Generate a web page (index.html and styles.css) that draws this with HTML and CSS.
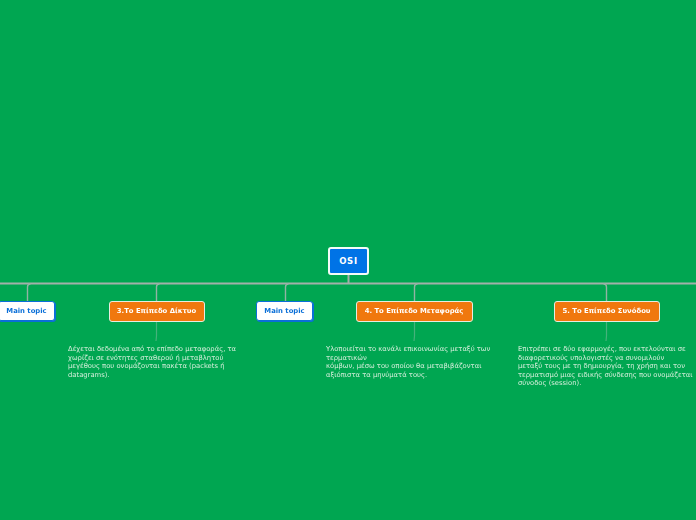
FILE: index.html
```html
<!DOCTYPE html>
<html lang="el">
<head>
<meta charset="utf-8">
<title>OSI</title>
<link rel="stylesheet" href="styles.css">
</head>
<body>
<main class="canvas">
  <svg class="links" width="696" height="520" viewBox="0 0 696 520" fill="none">
    <path class="trunk" d="M0 283.5H696M348.5 275V283"/>
    <path class="branch" d="M27.5 301V287Q27.5 284 30.5 284M156.5 301V287Q156.5 284 159.5 284M285.5 301V287Q285.5 284 288.5 284M414.5 301V287Q414.5 284 417.5 284M606.5 301V287Q606.5 284 603.5 284"/>
    <path class="note-link" d="M156.5 321V336L156 341M414.5 321V336L414 341M606.5 321V336L606 341"/>
  </svg>
  <div class="node root n-root">OSI</div>
  <div class="node plain n-m1">Main topic</div>
  <div class="node topic n-3">3.Το Επίπεδο Δίκτυο</div>
  <div class="node plain n-m2">Main topic</div>
  <div class="node topic n-4">4. Το Επίπεδο Μεταφοράς</div>
  <div class="node topic n-5">5. Το Επίπεδο Συνόδου</div>
  <p class="note t-3">Δέχεται δεδομένα από το επίπεδο μεταφοράς, τα<br>χωρίζει σε ενότητες σταθερού ή μεταβλητού<br>μεγέθους που ονομάζονται πακέτα (packets ή<br>datagrams).</p>
  <p class="note t-4">Υλοποιείται το κανάλι επικοινωνίας μεταξύ των<br>τερματικών<br>κόμβων, μέσω του οποίου θα μεταβιβάζονται<br>αξιόπιστα τα μηνύματά τους.</p>
  <p class="note t-5">Επιτρέπει σε δύο εφαρμογές, που εκτελούνται σε<br>διαφορετικούς υπολογιστές να συνομιλούν<br>μεταξύ τους με τη δημιουργία, τη χρήση και τον<br>τερματισμό μιας ειδικής σύνδεσης που ονομάζεται<br>σύνοδος (session).</p>
</main>
</body>
</html>
```
FILE: styles.css
```css
html, body {
  margin: 0;
  padding: 0;
  width: 696px;
  height: 520px;
  overflow: hidden;
  background: #00a651;
}
.canvas {
  position: relative;
  width: 696px;
  height: 520px;
  overflow: hidden;
  filter: blur(.3px);
  font-family: "DejaVu Sans", Verdana, sans-serif;
}
.links { position: absolute; left: 0; top: 0; }
.trunk { stroke: #a3b0aa; stroke-width: 2; }
.branch { stroke: #93b3a4; stroke-width: 1.4; }
.note-link { stroke: #45b27c; stroke-width: 1.2; }
.node {
  position: absolute;
  box-sizing: border-box;
  display: flex;
  align-items: center;
  justify-content: center;
  font-weight: 700;
  white-space: nowrap;
  border-radius: 3px;
}
.root {
  background: #0073e6;
  color: #fff;
  border: 2px solid #f4fbf8;
  font-size: 8.5px;
  letter-spacing: .7px;
}
.plain {
  background: #fff;
  color: #0a6fd8;
  border: 1.5px solid #0a6fd8;
  box-shadow: 1px 1px 0 #0a6fd8;
  font-size: 6.85px;
}
.topic {
  background: #f0780e;
  color: #fff;
  border: 1.5px solid #e6ede1;
  font-size: 6.85px;
}
.n-root { left: 328px; top: 247px; width: 41px; height: 28px; }
.n-m1 { left: -2px; top: 301px; width: 57px; height: 20px; }
.n-3 { left: 108.5px; top: 300.5px; width: 96px; height: 21px; }
.n-m2 { left: 256px; top: 301px; width: 57px; height: 20px; }
.n-4 { left: 355.5px; top: 300.5px; width: 117px; height: 21px; }
.n-5 { left: 553.5px; top: 300.5px; width: 106px; height: 21px; }
.note {
  position: absolute;
  margin: 0;
  top: 345px;
  color: #d6efdc;
  font-size: 6.8px;
  line-height: 8.6px;
  white-space: nowrap;
}
.t-3 { left: 68px; }
.t-4 { left: 326px; }
.t-5 { left: 518px; }
```
